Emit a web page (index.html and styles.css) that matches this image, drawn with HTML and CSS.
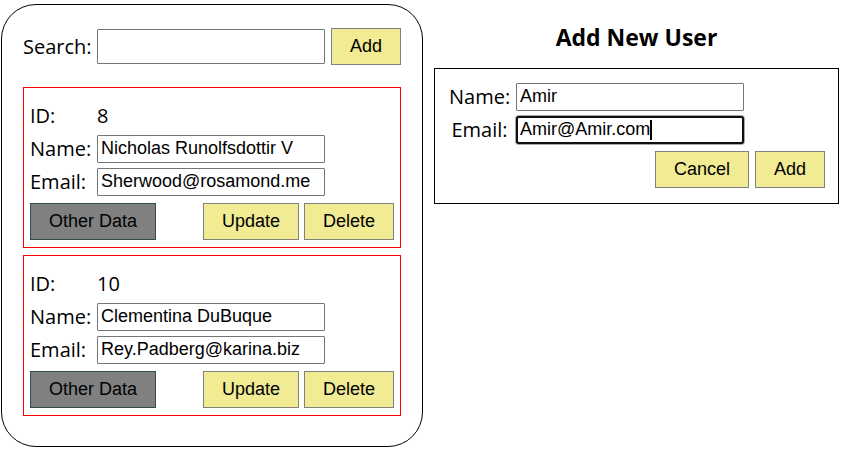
FILE: index.html
```html
<!DOCTYPE html>
<html lang="en">
<head>
<meta charset="utf-8">
<meta name="viewport" content="width=device-width, initial-scale=1">
<title>Users</title>
<link rel="stylesheet" href="styles.css">
</head>
<body>
<main class="page">
  <section class="users">
    <form class="search">
      <label for="search">Search:</label>
      <input class="field field-search" id="search" type="text">
      <button class="btn" type="button">Add</button>
    </form>
    <article class="user">
      <div class="fields">
        <span>ID:</span><span>8</span>
        <label for="name-8">Name:</label>
        <input class="field" id="name-8" type="text" value="Nicholas Runolfsdottir V">
        <label for="email-8">Email:</label>
        <input class="field" id="email-8" type="text" value="Sherwood@rosamond.me">
      </div>
      <div class="actions">
        <button class="btn btn-other" type="button">Other Data</button>
        <button class="btn" type="button">Update</button>
        <button class="btn" type="button">Delete</button>
      </div>
    </article>
    <article class="user">
      <div class="fields">
        <span>ID:</span><span>10</span>
        <label for="name-10">Name:</label>
        <input class="field" id="name-10" type="text" value="Clementina DuBuque">
        <label for="email-10">Email:</label>
        <input class="field" id="email-10" type="text" value="Rey.Padberg@karina.biz">
      </div>
      <div class="actions">
        <button class="btn btn-other" type="button">Other Data</button>
        <button class="btn" type="button">Update</button>
        <button class="btn" type="button">Delete</button>
      </div>
    </article>
  </section>
  <section class="add-user">
    <h2>Add New User</h2>
    <form class="new-user">
      <div class="fields fields-new">
        <label for="new-name">Name:</label>
        <input class="field" id="new-name" type="text" value="Amir">
        <label for="new-email">Email:</label>
        <div class="active-field">
          <input class="field field-active" id="new-email" type="text" value="Amir@Amir.com">
          <span class="caret"></span>
        </div>
      </div>
      <div class="actions actions-new">
        <button class="btn" type="button">Cancel</button>
        <button class="btn" type="button">Add</button>
      </div>
    </form>
  </section>
</main>
</body>
</html>
```
FILE: styles.css
```css
* {
  box-sizing: border-box;
}

body {
  margin: 0;
  background: #fff;
  color: #000;
  font: 20px/28px "Segoe UI", "Open Sans", sans-serif;
}

.page {
  display: grid;
  grid-template-columns: 422fr 405fr;
  gap: 11px;
  align-items: start;
  padding: 4px 13px 10px 1px;
}

.users {
  padding: 23px 21px 30px;
  border: 1px solid #000;
  border-radius: 35px;
}

.search {
  display: grid;
  grid-template-columns: 68px 228px auto;
  column-gap: 6px;
  align-items: center;
  justify-content: start;
  margin-bottom: 22px;
}

.search label {
  white-space: nowrap;
}

.user {
  padding: 14px 6px 7px;
  border: 1px solid #f00;
}

.user + .user {
  margin-top: 7px;
}

.fields {
  display: grid;
  grid-template-columns: 61px 228px;
  gap: 5px 6px;
  align-items: center;
  line-height: 30px;
  grid-auto-rows: 28px;
}

.field {
  width: 100%;
  height: 28px;
  margin: 0;
  padding: 0 3px 2px;
  border: 1px solid #767676;
  border-radius: 1px;
  background: #fff;
  color: #000;
  font: 18px "Liberation Sans", Arial, sans-serif;
}

.field-search {
  height: 35px;
}

.actions {
  display: flex;
  gap: 5px;
  justify-content: flex-end;
  margin-top: 7px;
}

.actions-new {
  gap: 6px;
}

.btn {
  height: 37px;
  padding: 0 18px;
  border: 1px solid #808080;
  border-radius: 0;
  background: #f1eb93;
  color: #000;
  font: 18px "Liberation Sans", Arial, sans-serif;
}

.btn-other {
  margin-right: auto;
  border-color: #2f4f4f;
  background: #808080;
}

.add-user h2 {
  margin: 17px 0 15px;
  font-size: 23px;
  line-height: 32px;
  text-align: center;
}

.new-user {
  padding: 14px 13px 15px 14px;
  border: 1px solid #000;
}

.fields-new label {
  text-align: center;
}

.active-field {
  position: relative;
  display: flex;
}

.field-active {
  border-color: #101010;
  border-radius: 3px;
  outline: 2px solid #101010;
  outline-offset: -2px;
  box-shadow: 0 0 0 1px #a8a8a8;
}

.caret {
  position: absolute;
  top: 4px;
  left: 134px;
  width: 2px;
  height: 20px;
  background: #000;
}
```
